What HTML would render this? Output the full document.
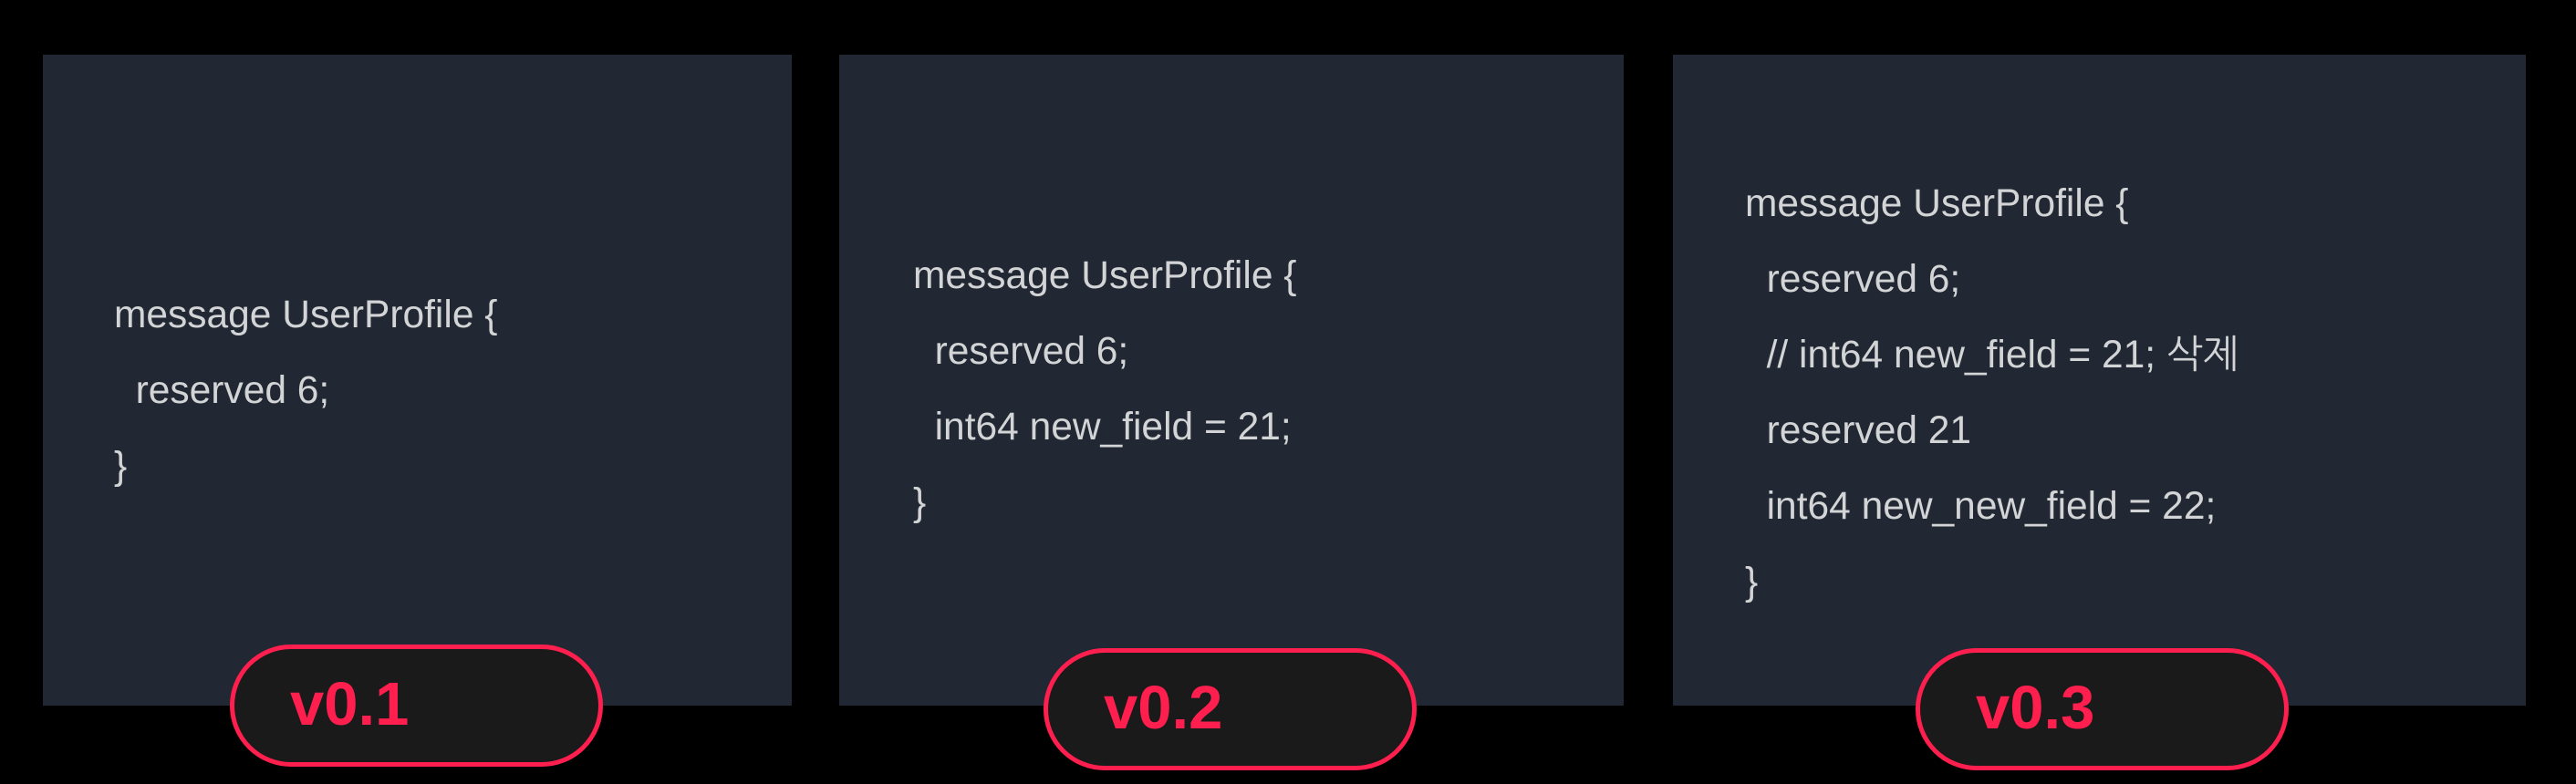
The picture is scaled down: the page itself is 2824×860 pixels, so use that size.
<!DOCTYPE html>
<html><head><meta charset="utf-8"><style>
html,body{margin:0;padding:0;background:#000;width:2824px;height:860px;overflow:hidden;position:relative}
.p{position:absolute;background:#222833;top:60px;height:714px}
.t{position:absolute;font-family:"Liberation Sans","NanumGothic",sans-serif;font-size:42.5px;line-height:83px;color:#d2d4d6;white-space:pre}
.b{position:absolute;box-sizing:border-box;border:5px solid #ff1f4f;background:#1a1a1a;border-radius:70px;height:134px;width:409px}
.v{position:absolute;font-family:"Liberation Sans",sans-serif;font-weight:bold;font-size:67px;color:#ff1f4f;line-height:1}
</style></head><body>
<div class="p" style="left:47px;width:821px"></div>
<div class="p" style="left:920px;width:860px"></div>
<div class="p" style="left:1834px;width:935px"></div>

<div class="t" style="left:125px;top:304px">message UserProfile {
  reserved 6;
}</div>
<div class="t" style="left:1001px;top:261px">message UserProfile {
  reserved 6;
  int64 new_field = 21;
}</div>
<div class="t" style="left:1913px;top:182px">message UserProfile {
  reserved 6;
  // int64 new_field = 21; 삭제
  reserved 21
  int64 new_new_field = 22;
}</div>

<div class="b" style="left:252px;top:707px"></div>
<div class="v" style="left:318px;top:739px">v0.1</div>
<div class="b" style="left:1144px;top:711px"></div>
<div class="v" style="left:1210px;top:743px">v0.2</div>
<div class="b" style="left:2100px;top:711px"></div>
<div class="v" style="left:2166px;top:743px">v0.3</div>
</body></html>
